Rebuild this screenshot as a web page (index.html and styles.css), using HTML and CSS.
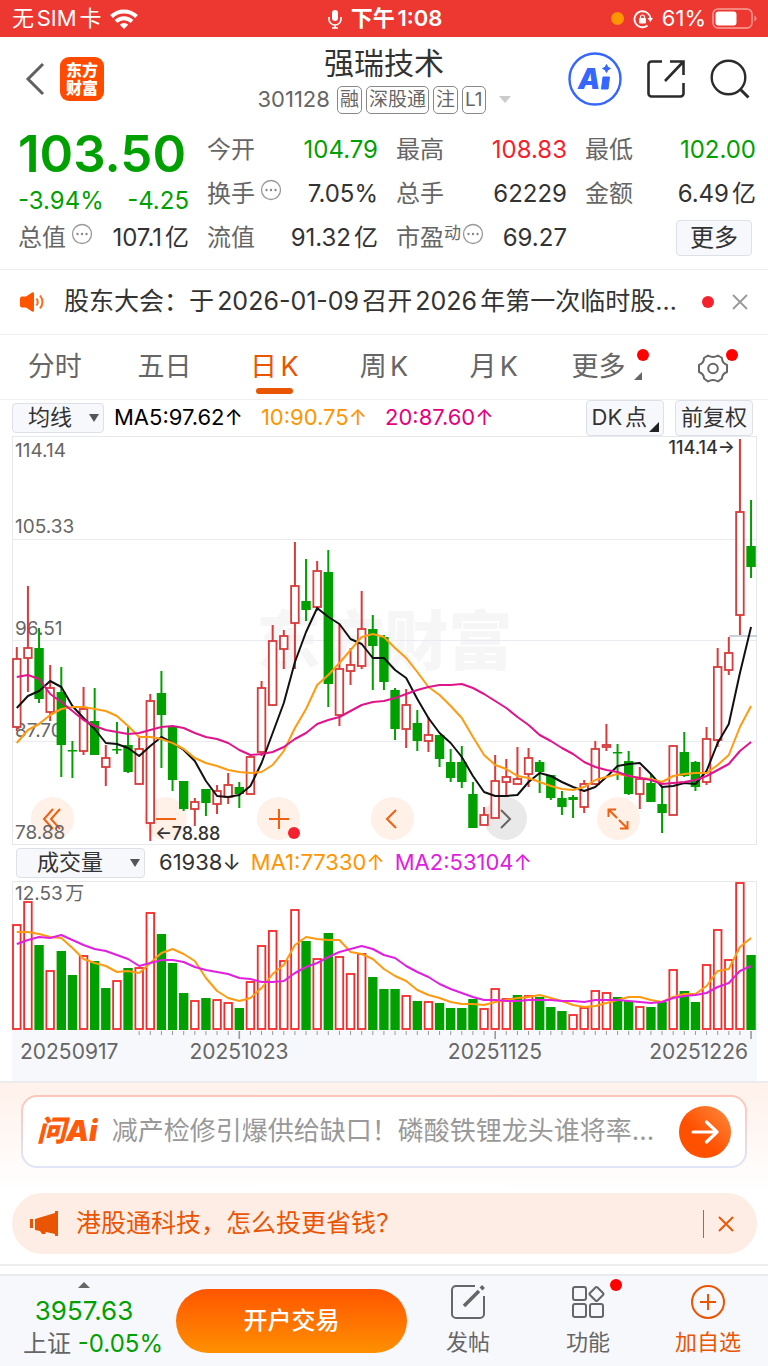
FILE: index.html
```html
<!DOCTYPE html>
<html lang="zh-CN">
<head>
  <meta charset="UTF-8">
  <meta name="viewport" content="width=device-width, initial-scale=1.0">
  <title>强瑞技术 301128</title>
  <link rel="stylesheet" href="styles.css">
</head>
<body>
  <div class="status-bar">
    <div class="status-left">
      <span>无SIM卡</span>
      <svg width="28" height="22" viewBox="0 0 28 22" fill="none" stroke="#fff" stroke-width="4">
        <path d="M1.5 8.5a18 18 0 0 1 25 0"/>
        <path d="M6 13.5a11.5 11.5 0 0 1 16 0"/>
        <path d="M14 21l-4.2-4.2a6 6 0 0 1 8.4 0z" fill="#fff" stroke="none"/>
      </svg>
    </div>
    <div class="status-time">
      <svg width="14" height="20" viewBox="0 0 14 20" fill="none" stroke="#fff" stroke-width="1.6">
        <rect x="4" y="1" width="6" height="11" rx="3" fill="#fff" stroke="none"/>
        <path d="M1 8v2a6 6 0 0 0 12 0V8M7 16v3M4 19h6"/>
      </svg>
      <span>下午1:08</span>
    </div>
    <div class="status-right">
      <span class="privacy-dot"></span>
      <svg width="20" height="20" viewBox="0 0 20 20" fill="none" stroke="#fff" stroke-width="1.8">
        <path d="M14.5 16.5a8 8 0 1 1 3-6.5"/>
        <path d="M14.5 9h5.500l-2.700 4z" fill="#fff" stroke="none"/>
        <rect x="6" y="9" width="7" height="5.500" rx="1" fill="#fff" stroke="none"/>
        <path d="M7.500 9.500V8a2 2 0 0 1 4 0v1.500" stroke-width="1.200"/>
      </svg>
      <span>61%</span>
      <svg width="46" height="22" viewBox="0 0 46 22">
        <rect x="1" y="1" width="39" height="19" rx="5" fill="none" stroke="#f8a09b" stroke-width="1.500"/>
        <rect x="3.500" y="3.500" width="21" height="14" rx="3" fill="#fff"/>
        <path d="M42.500 7.500q4 3 0 6z" fill="#f8a09b"/>
      </svg>
    </div>
  </div>

  <header class="header">
    <div class="header-left">
      <button class="icon-button" aria-label="返回">
        <svg width="22" height="34" viewBox="0 0 22 34" fill="none" stroke="#606060" stroke-width="3"><path d="M19 2L4 17l15 15"/></svg>
      </button>
      <div class="app-logo">东方<br>财富</div>
    </div>
    <div class="stock">
      <h1>强瑞技术</h1>
      <div class="stock-meta">
        <span class="stock-code">301128</span>
        <span class="tag">融</span>
        <span class="tag">深股通</span>
        <span class="tag">注</span>
        <span class="tag">L1</span>
        <span class="meta-caret"></span>
      </div>
    </div>
    <div class="header-right">
      <button class="icon-button" aria-label="智能助手">
        <svg width="54" height="54" viewBox="0 0 54 54">
          <circle cx="27" cy="27" r="25.500" fill="none" stroke="#3566ff" stroke-width="2.400"/>
          <text class="ai-letters" x="10" y="37">A</text>
          <path d="M35 25h6.500l-1.500 12h-6.500z" fill="#3566ff" stroke="#3566ff" stroke-linejoin="round"/>
          <path d="M38.500 12.500q1 3.500 4 4-3 .500-4 4-1-3.500-4-4 3-.500 4-4z" fill="#3566ff" stroke="#3566ff"/>
        </svg>
      </button>
      <button class="icon-button" aria-label="分享">
        <svg width="38" height="38" viewBox="0 0 38 38" fill="none" stroke="#2b2b2b" stroke-width="2.600">
          <path d="M15 1.500H4.500a3 3 0 0 0-3 3v29a3 3 0 0 0 3 3h29a3 3 0 0 0 3-3V23M23 1.500h13.500V15M36.500 1.500L18 21"/>
        </svg>
      </button>
      <button class="icon-button" aria-label="搜索">
        <svg width="40" height="40" viewBox="0 0 40 40" fill="none" stroke="#2b2b2b" stroke-width="2.400">
          <circle cx="18.500" cy="18.500" r="16.800"/><path d="M30 30l8.500 8.500" stroke-width="3"/>
        </svg>
      </button>
    </div>
  </header>

  <section class="quote">
    <div class="quote-price">
      <div class="price">103.50</div>
      <div class="change"><span>-3.94%</span><span>-4.25</span></div>
    </div>
    <div class="cell"><span class="label">今开</span><span class="down">104.79</span></div>
    <div class="cell"><span class="label">最高</span><span class="up">108.83</span></div>
    <div class="cell"><span class="label">最低</span><span class="down">102.00</span></div>
    <div class="cell"><span class="label">换手<svg class="more-dots" viewBox="0 0 22 22"><use href="#dots"/></svg></span><span>7.05%</span></div>
    <div class="cell"><span class="label">总手</span><span>62229</span></div>
    <div class="cell"><span class="label">金额</span><span>6.49亿</span></div>
    <div class="cell"><span class="label">总值<svg class="more-dots" viewBox="0 0 22 22"><use href="#dots"/></svg></span><span>107.1亿</span></div>
    <div class="cell"><span class="label">流值</span><span>91.32亿</span></div>
    <div class="cell"><span class="label">市盈<small>动</small><svg class="more-dots tight" viewBox="0 0 22 22"><use href="#dots"/></svg></span><span>69.27</span></div>
    <div class="cell cell-more"><button class="more-button">更多</button></div>
  </section>

  <svg class="defs" width="0" height="0">
    <symbol id="dots" viewBox="0 0 22 22">
      <circle cx="11" cy="11" r="9.500" fill="none" stroke="#999" stroke-width="1.300"/>
      <circle cx="6.500" cy="11" r="1.200" fill="#888"/><circle cx="11" cy="11" r="1.200" fill="#888"/><circle cx="15.500" cy="11" r="1.200" fill="#888"/>
    </symbol>
    <symbol id="cross" viewBox="0 0 16 16"><path d="M1 1l14 14M15 1L1 15" fill="none" stroke="currentColor" stroke-width="1.800"/></symbol>
  </svg>

  <section class="notice">
    <svg width="24" height="20" viewBox="0 0 24 20">
      <path d="M0 6.500a2 2 0 0 1 2-2h4L12 .500q2-1 2 1v17q0 2-2 1L6 15.500H2a2 2 0 0 1-2-2z" fill="#ff5500"/>
      <path d="M16.500 6.500q2.500 3.500 0 7M20 3.500q5 6.500 0 13" fill="none" stroke="#ff6a20" stroke-width="2"/>
    </svg>
    <p>股东大会：于2026-01-09召开2026年第一次临时股…</p>
    <span class="dot"></span>
    <button class="icon-button notice-close" aria-label="关闭公告"><svg width="16" height="16"><use href="#cross"/></svg></button>
  </section>

  <nav class="tabs">
    <button>分时</button>
    <button>五日</button>
    <button class="active">日K</button>
    <button>周K</button>
    <button>月K</button>
    <button class="tab-more">更多<span class="corner"></span><span class="badge"></span></button>
    <button class="tab-settings" aria-label="设置">
      <svg width="30" height="30" viewBox="0 0 30 30" fill="none" stroke="#666" stroke-width="2">
        <path d="M10 1.500q5 3 10 0l4 2.500q0 5 5 7v7q-5 2-5 6.500l-4 3q-5-3-10 0l-4-3q0-4.500-5-6.500v-7q5-2 5-7z" stroke-linejoin="round"/>
        <circle cx="15" cy="14.500" r="4.800"/>
      </svg>
      <span class="badge"></span>
    </button>
  </nav>

  <main class="charts">
    <div class="indicator-bar">
      <span class="select-wrap">
        <select aria-label="主图指标"><option>均线</option></select>
      </span>
      <span class="ma-black">MA5:97.62↑</span>
      <span class="ma-orange">10:90.75↑</span>
      <span class="ma-pink">20:87.60↑</span>
      <div class="chart-buttons">
        <button class="dk">DK点<span class="corner"></span></button>
        <button>前复权</button>
      </div>
    </div>

    <div class="k-chart">
      <div class="watermark">东方财富</div>
      <div class="chart-controls">
        <button aria-label="最早"><svg viewBox="0 0 24 24"><path d="M12 2L3 12l9 10M19 2l-9 10 9 10"/></svg></button>
        <button aria-label="缩小"><svg viewBox="0 0 24 24"><path d="M2 12h20"/></svg></button>
        <button aria-label="放大"><svg viewBox="0 0 24 24"><path d="M2 12h20M12 2v20"/></svg><span class="badge"></span></button>
        <button aria-label="左移"><svg viewBox="0 0 24 24"><path d="M16 3l-9 9 9 9"/></svg></button>
        <button class="grey" aria-label="右移"><svg viewBox="0 0 24 24"><path d="M8 3l9 9-9 9"/></svg></button>
        <button aria-label="全屏"><svg viewBox="0 0 24 24"><path d="M2.500 10V2.500H10M3 3l8 8M21.500 14v7.500H14M21 21l-8-8"/></svg></button>
      </div>
      <svg id="kline" class="plot" viewBox="12 436 745 409"></svg>
    </div>

    <div class="indicator-bar volume-bar">
      <span class="select-wrap wide">
        <select aria-label="副图指标"><option>成交量</option></select>
      </span>
      <span>61938↓</span>
      <span class="ma-orange">MA1:77330↑</span>
      <span class="ma-purple">MA2:53104↑</span>
    </div>
    <svg id="volume" class="plot" viewBox="12 881 745 200"></svg>
  </main>

  <section class="ask">
    <form class="ask-box" onsubmit="return false">
      <span class="ask-logo">问Ai</span>
      <input type="text" aria-label="问Ai" placeholder="减产检修引爆供给缺口！磷酸铁锂龙头谁将率…">
      <button aria-label="发送">
        <svg width="28" height="24" viewBox="0 0 28 24" fill="none" stroke="#fff" stroke-width="3.200" stroke-linecap="round" stroke-linejoin="round"><path d="M2 12h24M15.500 2L26 12 15.500 22"/></svg>
      </button>
    </form>
  </section>

  <aside class="promo">
    <svg width="28" height="26" viewBox="0 0 28 26" fill="#ea5504">
      <path d="M0 8h3v9H0zM5 8l20-6V0h3v25h-3v-2l-9-2-1 2h-3l-2-3-5-1z"/>
    </svg>
    <a href="#">港股通科技，怎么投更省钱？</a>
    <button class="icon-button" aria-label="关闭广告"><svg width="16" height="16"><use href="#cross"/></svg></button>
  </aside>

  <footer class="bottom-bar">
    <div class="index">
      <span class="index-caret"></span>
      <span class="index-value">3957.63</span>
      <span class="index-name">上证 <b>-0.05%</b></span>
    </div>
    <button class="trade">开户交易</button>
    <button class="action">
      <svg width="34" height="34" viewBox="0 0 34 34" fill="none" stroke="#666" stroke-width="2">
        <path d="M24 1H5a4 4 0 0 0-4 4v24a4 4 0 0 0 4 4h24a4 4 0 0 0 4-4V11"/>
        <path d="M13 21L28 6" stroke-width="3.500"/><path d="M30 4l2.500-2.500" stroke-width="4"/>
      </svg>
      发帖
    </button>
    <button class="action">
      <svg width="34" height="34" viewBox="0 0 34 34" fill="none" stroke="#666" stroke-width="2">
        <rect x="2" y="2" width="13" height="13" rx="2"/><rect x="2" y="19" width="13" height="13" rx="2"/><rect x="19" y="19" width="13" height="13" rx="2"/>
        <path d="M24.500 2.500q1-1 2 0l5.500 5.500q1 1 0 2L26.500 15.500q-1 1-2 0L19 10q-1-1 0-2z"/>
      </svg>
      功能
      <span class="badge"></span>
    </button>
    <button class="action add">
      <svg width="34" height="34" viewBox="0 0 34 34" fill="none" stroke="#ea5504" stroke-width="2"><circle cx="17" cy="17" r="16"/><path d="M9 17h16M17 9v16"/></svg>
      加自选
    </button>
  </footer>

  <script src="chart.js"></script>
</body>
</html>
```

FILE: styles.css
```css
* {
  margin: 0;
  padding: 0;
  box-sizing: border-box;
}

body {
  font-family: Inter, "Noto Sans CJK SC", sans-serif;
  font-size: 24px;
  line-height: 1.25;
  color: #333;
  background: #fff;
  text-autospace: normal;
}

button,
input,
select {
  font: inherit;
  color: inherit;
  border: none;
  background: none;
  text-autospace: inherit;
}

button {
  cursor: pointer;
}

svg {
  flex: none;
}

.defs {
  position: absolute;
}

.icon-button {
  display: flex;
  align-items: center;
}

.badge {
  position: absolute;
  width: 12px;
  height: 12px;
  border-radius: 50%;
  background: #ff0000;
}

/* Status bar */
.status-bar {
  display: grid;
  grid-template-columns: 1fr auto 1fr;
  align-items: center;
  height: 37px;
  padding: 0 10px 0 12px;
  font-size: 22px;
  color: #fff;
  background: #ed3831;
}

.status-left,
.status-time,
.status-right {
  display: flex;
  align-items: center;
  gap: 9px;
}

.status-time {
  font-weight: 600;
}

.status-right {
  justify-content: flex-end;
}

.status-right svg:last-child {
  margin-left: -3px;
}

.privacy-dot {
  width: 13px;
  height: 13px;
  border-radius: 50%;
  background: #ff9500;
}

/* Header */
.header {
  display: grid;
  grid-template-columns: 1fr auto 1fr;
  align-items: center;
  padding: 5px 18px 10px;
}

.header-left,
.header-right {
  display: flex;
  align-items: center;
}

.header-left {
  gap: 14px;
  padding-left: 6px;
}

.header-right {
  justify-content: flex-end;
  gap: 25px;
}

.app-logo {
  width: 44px;
  height: 44px;
  padding-top: 4px;
  border-radius: 9px;
  font-size: 16px;
  font-weight: 900;
  line-height: 18px;
  text-align: center;
  color: #fff;
  background: #ff4a00;
}

.ai-letters {
  font-size: 28px;
  font-weight: 900;
  font-style: italic;
  fill: #3566ff;
}

.stock {
  text-align: center;
}

.stock h1 {
  font-size: 30px;
  font-weight: 400;
  line-height: 42px;
}

.stock-meta {
  display: flex;
  align-items: center;
  justify-content: center;
  gap: 4px;
  height: 31px;
  color: #666;
}

.stock-code {
  margin-right: 3px;
  font-size: 22px;
}

.tag {
  padding: 0 2px;
  border: 1px solid #888;
  border-radius: 5px;
  font-size: 19px;
  line-height: 26px;
}

.meta-caret {
  margin-left: 9px;
  border: 6px solid transparent;
  border-top: 7px solid #ccc;
  border-bottom: none;
}

/* Quote */
.quote {
  display: grid;
  grid-template-columns: repeat(4, 1fr);
  grid-auto-rows: 44px;
  column-gap: 18px;
  padding: 3px 12px 9px 18px;
  border-bottom: 1px solid #eee;
}

.quote-price {
  grid-row: span 2;
  display: flex;
  flex-direction: column;
  justify-content: space-between;
  color: #00a000;
}

.price {
  font-size: 51px;
  font-weight: 600;
  line-height: 52px;
}

.change {
  display: flex;
  justify-content: space-between;
  line-height: 30px;
}

.cell {
  display: flex;
  align-items: center;
  justify-content: space-between;
  white-space: nowrap;
}

.label {
  display: flex;
  align-items: center;
  color: #666;
}

.label small {
  align-self: flex-start;
  font-size: 17px;
  line-height: 20px;
}

.more-dots {
  align-self: flex-start;
  width: 22px;
  height: 22px;
  margin-left: 5px;
}

.more-dots.tight {
  margin-left: 1px;
}

.down {
  color: #00a000;
}

.up {
  color: #f5222d;
}

.cell-more {
  justify-content: flex-end;
  padding-right: 4px;
}

.more-button {
  padding: 0 13px;
  border: 1px solid #dde0e6;
  border-radius: 4px;
  line-height: 34px;
  background: #f7f8fb;
}

/* Notice */
.notice {
  display: flex;
  align-items: center;
  justify-content: space-between;
  height: 65px;
  padding: 0 20px;
  border-bottom: 1px solid #f0f0f0;
  font-size: 25px;
}

.notice p {
  flex: 1;
  margin-left: 20px;
  white-space: nowrap;
}

.dot {
  width: 12px;
  height: 12px;
  border-radius: 50%;
  background: #f5222d;
}

.notice-close {
  margin-left: 18px;
  color: #999;
}

/* Tabs */
.tabs {
  display: grid;
  grid-template-columns: repeat(7, 1fr);
  height: 65px;
  border-bottom: 1px solid #f0f0f0;
  font-size: 27px;
  color: #666;
}

.tabs button {
  position: relative;
}

.tabs .active {
  color: #ea5504;
}

.active::after {
  content: "";
  position: absolute;
  left: calc(50% - 18px);
  bottom: 5px;
  width: 37px;
  height: 6px;
  border-radius: 3px;
  background: #ea5504;
}

.tabs .tab-more {
  padding-right: 10px;
}

.corner {
  position: absolute;
  right: 4px;
  bottom: 3px;
  border-left: 10px solid transparent;
  border-bottom: 10px solid #222;
}

.tab-more .corner {
  right: 16px;
  bottom: 19px;
  border-left-width: 8px;
  border-bottom: 8px solid #666;
}

.tabs .badge {
  top: 14px;
  right: 9px;
}

.tabs .tab-settings .badge {
  right: 30px;
}

.tab-settings svg {
  vertical-align: middle;
}

/* Charts */
.charts {
  padding: 0 11px 0 12px;
}

.indicator-bar {
  display: flex;
  align-items: center;
  gap: 18px;
  height: 36px;
  font-size: 22px;
  white-space: nowrap;
}

.indicator-bar > span:nth-child(2) {
  margin-left: -8px;
}

.select-wrap {
  position: relative;
  width: 92px;
}

.select-wrap.wide {
  width: 129px;
}

.select-wrap::after {
  content: "";
  position: absolute;
  right: 5px;
  top: 11px;
  border: 5px solid transparent;
  border-top: 8px solid #555;
  border-bottom: none;
}

.select-wrap select {
  display: block;
  width: 100%;
  height: 30px;
  padding-left: 15px;
  appearance: none;
  border: 1px solid #dde0e6;
  border-radius: 4px;
  background: #f7f8fb;
}

.select-wrap.wide select {
  padding-left: 20px;
}

.ma-black {
  color: #000;
}

.ma-orange {
  color: #ff9500;
}

.ma-pink {
  color: #e6007e;
}

.ma-purple {
  color: #e020e0;
}

.chart-buttons {
  display: flex;
  gap: 11px;
  margin-left: auto;
  padding-right: 4px;
}

.chart-buttons button {
  position: relative;
  height: 36px;
  padding: 0 5px;
  border: 1px solid #dde0e6;
  border-radius: 4px;
  background: #f7f8fb;
}

.chart-buttons .dk {
  padding-right: 16px;
}

.volume-bar {
  gap: 10px;
  padding-left: 4px;
}

.volume-bar > span:nth-child(2) {
  margin-left: 4px;
}

.k-chart {
  position: relative;
}

.plot {
  display: block;
  position: relative;
  width: 100%;
  height: auto;
  pointer-events: none;
}

.plot text {
  font-size: 19px;
  fill: #666;
}

.plot .mark {
  font-size: 18px;
  font-weight: 500;
  fill: #333;
}

.plot .date {
  font-size: 21px;
}

.plot polyline {
  fill: none;
  stroke-width: 2;
  stroke-linejoin: round;
}

.watermark {
  position: absolute;
  top: 40%;
  width: 100%;
  font-size: 64px;
  font-weight: 900;
  line-height: 82px;
  text-align: center;
  color: #f6f6f6;
}

.chart-controls {
  position: absolute;
  left: 19px;
  right: 117px;
  bottom: 5px;
  display: flex;
  justify-content: space-between;
}

.chart-controls button {
  position: relative;
  display: flex;
  align-items: center;
  justify-content: center;
  width: 43px;
  height: 43px;
  border-radius: 50%;
  background: #fff0e8;
}

.chart-controls .grey {
  background: #e9e9e9;
}

.chart-controls svg {
  width: 24px;
  height: 24px;
  fill: none;
  stroke: #f06010;
  stroke-width: 2;
}

.chart-controls .grey svg {
  stroke: #666;
}

.chart-controls .badge {
  right: 0;
  bottom: 1px;
  background: #f5222d;
}

/* Ask */
.ask {
  padding: 12px 21px 25px;
  border-top: 2px solid #ececef;
  background: linear-gradient(#fff1eb, #fff);
}

.ask-box {
  display: flex;
  align-items: center;
  height: 73px;
  padding: 0 14px;
  border: 2px solid transparent;
  border-radius: 16px;
  background: linear-gradient(#fff, #fff) padding-box, linear-gradient(#ffc4b8, #dfe6f8) border-box;
}

.ask-logo {
  font-size: 29px;
  font-weight: 900;
  font-style: italic;
  color: #ff5a0a;
  text-autospace: no-autospace;
}

.ask-box input {
  flex: 1;
  min-width: 0;
  margin: 0 20px 0 14px;
  font-size: 26px;
  text-overflow: ellipsis;
}

.ask-box input::placeholder {
  color: #999;
}

.ask-box button {
  display: flex;
  align-items: center;
  justify-content: center;
  width: 52px;
  height: 52px;
  border-radius: 50%;
  background: linear-gradient(45deg, #ff5000 40%, #ff8c40);
}

/* Promo */
.promo {
  display: flex;
  align-items: center;
  height: 61px;
  margin: 0 11px 20px 12px;
  padding: 0 23px 0 18px;
  border-radius: 31px;
  font-size: 25px;
  color: #ea5504;
  background: #feede5;
}

.promo a {
  flex: 1;
  margin-left: 18px;
  color: inherit;
  text-decoration: none;
}

.promo button {
  height: 28px;
  padding-left: 14px;
  border-left: 1px solid #ea5504;
}

/* Bottom bar */
.bottom-bar {
  display: grid;
  grid-template-columns: 168px 1fr repeat(3, 120px);
  align-items: center;
  height: 92px;
  border-top: 2px solid #e8eaee;
  background: #f7f8fb;
  box-shadow: 0 -8px 0 #fff, 0 -10px 0 #eee;
}

.index {
  display: flex;
  flex-direction: column;
  align-items: center;
  padding-left: 18px;
  line-height: 33px;
  white-space: nowrap;
}

.index-caret {
  margin: 0 18px 6px 0;
  border: 6px solid transparent;
  border-top: none;
  border-bottom: 6px solid #666;
}

.index-value,
.index-name b {
  font-weight: 400;
  color: #00a000;
}

.index-value {
  margin-right: 18px;
  font-size: 26px;
}

.index-name {
  color: #666;
}

.trade {
  height: 64px;
  margin: 0 1px 0 8px;
  border-radius: 32px;
  font-weight: 500;
  color: #fff;
  background: linear-gradient(#ff5500, #ff9000);
}

.action {
  position: relative;
  display: flex;
  flex-direction: column;
  align-items: center;
  gap: 8px;
  font-size: 22px;
  line-height: 30px;
  color: #666;
}

.action .badge {
  top: -6px;
  right: 26px;
}

.action.add {
  color: #ea5504;
}
```

FILE: chart.js
```js
// [colour, high, body top, body bottom, low, volume colour, volume top]
const days = [
  ['r', 647, 659, 727, 731, 'r', 924], ['r', 586, 648, 658, 692, 'r', 901], ['g', 628, 648, 699, 703, 'g', 945],
  ['r', 665, 688, 712, 721, 'r', 970], ['g', 667, 692, 745, 777, 'g', 951], ['g', 741, 750, 751, 778, 'g', 975],
  ['r', 687, 709, 751, 755, 'r', 955], ['g', 688, 721, 755, 755, 'g', 961], ['r', 745, 758, 767, 786, 'g', 988],
  ['g', 722, 749, 750, 754, 'r', 980], ['g', 727, 745, 772, 773, 'g', 968], ['r', 738, 749, 784, 784, 'r', 967],
  ['r', 694, 701, 823, 841, 'r', 912], ['g', 671, 693, 715, 768, 'g', 934], ['g', 727, 727, 780, 791, 'g', 963],
  ['g', 781, 781, 809, 811, 'g', 993], ['r', 798, 802, 809, 826, 'r', 1000], ['g', 789, 789, 803, 816, 'g', 998],
  ['r', 785, 791, 804, 814, 'r', 999], ['r', 773, 785, 797, 804, 'r', 1002], ['g', 782, 787, 794, 808, 'g', 1008],
  ['r', 755, 757, 794, 794, 'r', 981], ['r', 681, 688, 752, 756, 'r', 945], ['r', 625, 641, 705, 706, 'r', 930],
  ['r', 630, 636, 649, 669, 'r', 960], ['r', 542, 586, 623, 669, 'r', 909], ['g', 559, 601, 610, 621, 'g', 941],
  ['r', 561, 571, 607, 611, 'r', 958], ['g', 550, 572, 684, 707, 'g', 933], ['r', 624, 669, 715, 726, 'r', 956],
  ['r', 648, 665, 671, 685, 'r', 973], ['r', 591, 629, 666, 669, 'r', 953], ['g', 615, 629, 646, 690, 'g', 977],
  ['g', 635, 637, 682, 690, 'g', 989], ['g', 688, 690, 729, 740, 'g', 989], ['r', 689, 705, 729, 748, 'r', 995],
  ['g', 710, 723, 741, 751, 'g', 1001], ['r', 717, 735, 741, 752, 'r', 1001], ['g', 735, 735, 759, 767, 'g', 1003],
  ['g', 749, 762, 778, 782, 'g', 1008], ['g', 746, 762, 782, 788, 'g', 1008], ['g', 782, 794, 828, 828, 'g', 999],
  ['r', 807, 815, 825, 825, 'r', 1008], ['r', 755, 781, 818, 818, 'r', 988], ['r', 759, 777, 782, 795, 'r', 998],
  ['r', 747, 779, 784, 784, 'g', 995], ['r', 748, 758, 774, 787, 'r', 995], ['g', 760, 762, 772, 793, 'g', 997],
  ['g', 775, 775, 798, 800, 'g', 1007], ['g', 791, 798, 807, 815, 'g', 1011], ['g', 795, 797, 800, 818, 'r', 1014],
  ['r', 780, 784, 807, 813, 'r', 1007], ['r', 741, 749, 784, 785, 'r', 990], ['r', 724, 745, 747, 751, 'r', 992],
  ['g', 744, 752, 753, 780, 'g', 997], ['g', 751, 761, 794, 795, 'g', 1001], ['r', 767, 779, 794, 809, 'r', 1006],
  ['g', 774, 783, 802, 802, 'g', 1007], ['g', 787, 804, 813, 833, 'g', 1002], ['r', 745, 746, 815, 815, 'r', 969],
  ['g', 732, 752, 776, 777, 'g', 991], ['g', 761, 762, 787, 791, 'g', 1002], ['r', 727, 739, 782, 785, 'r', 964],
  ['r', 648, 667, 740, 747, 'r', 929], ['r', 637, 653, 670, 675, 'r', 959], ['r', 439, 512, 615, 635, 'r', 882],
  ['g', 500, 546, 567, 578, 'g', 955]
];

const ma5 = [708, 696, 691, 681, 687, 706, 718, 729, 743, 744, 748, 756, 746, 737, 743, 750, 761, 781, 796, 797, 795, 786, 763, 733, 703, 662, 632, 608, 617, 624, 639, 644, 658, 658, 670, 678, 699, 718, 733, 743, 757, 776, 792, 796, 796, 795, 782, 773, 776, 782, 787, 791, 787, 777, 766, 764, 763, 774, 787, 786, 783, 784, 771, 743, 724, 673, 627];
const ma10 = [743, 730, 724, 715, 709, 707, 707, 709, 711, 716, 726, 737, 737, 739, 743, 749, 758, 763, 766, 770, 772, 773, 772, 765, 751, 728, 709, 685, 675, 663, 650, 637, 634, 637, 648, 658, 672, 687, 695, 706, 718, 737, 755, 765, 769, 776, 778, 782, 786, 789, 790, 787, 780, 777, 774, 776, 778, 779, 782, 776, 774, 773, 773, 765, 755, 727, 706];
const ma20 = [677, 675, 679, 694, 702, 711, 720, 726, 730, 732, 734, 733, 730, 727, 726, 728, 733, 737, 739, 743, 750, 755, 754, 752, 747, 739, 733, 724, 720, 717, 711, 705, 702, 701, 698, 694, 690, 687, 685, 685, 684, 688, 694, 701, 708, 717, 725, 735, 741, 748, 754, 762, 767, 770, 772, 776, 778, 780, 784, 783, 782, 780, 776, 770, 764, 751, 742];
const vol1 = [932, 932, 934, 937, 938, 948, 959, 963, 966, 972, 971, 973, 963, 953, 949, 954, 961, 978, 991, 998, 1001, 998, 988, 974, 965, 945, 937, 939, 940, 940, 952, 954, 959, 969, 976, 981, 990, 995, 998, 1002, 1004, 1004, 1005, 1002, 1000, 998, 997, 995, 998, 1001, 1005, 1007, 1006, 1003, 1000, 997, 997, 1000, 1002, 997, 994, 994, 986, 971, 969, 947, 938];
const vol2 = [944, 940, 937, 938, 935, 940, 945, 949, 951, 955, 959, 966, 963, 960, 960, 962, 967, 970, 972, 974, 978, 979, 982, 982, 981, 973, 967, 963, 957, 952, 949, 946, 949, 955, 958, 966, 972, 977, 984, 989, 993, 997, 1000, 1000, 1001, 1001, 1000, 1000, 1000, 1001, 1001, 1002, 1000, 1000, 1000, 1001, 1002, 1003, 1002, 998, 996, 995, 993, 987, 983, 971, 966];

const step = 11.125;
const x = i => 16.8 + i * step;

function hline(y, from, to, color) {
  return `<path d="M${from} ${y}H${to}" stroke="${color}"/>`;
}

function average(values, color) {
  const points = values.map((y, i) => `${x(i)},${y}`).join(' ');
  return `<polyline points="${points}" stroke="${color}"/>`;
}

// rising days are hollow, falling days are solid
function bar(i, top, bottom, color, up) {
  if (up) {
    return `<rect x="${x(i) - 3.8}" y="${top}" width="7.6" height="${Math.max(bottom - top, 1)}" fill="#fff" stroke="${color}" stroke-width="1.8"/>`;
  }
  return `<rect x="${x(i) - 4.7}" y="${top}" width="9.4" height="${Math.max(bottom - top, 1.5)}" fill="${color}"/>`;
}

function drawKline() {
  let out = '<rect x="12.500" y="436.500" width="744" height="408" fill="none" stroke="#e6e8ec"/>';
  [539.5, 640.5, 741.5].forEach(y => { out += hline(y, 12, 757, '#e9ebf0'); });
  out += '<path d="M729 636H757" stroke="#ccd0d8" stroke-width="2"/>';
  [['114.14', 457], ['105.33', 533], ['96.51', 635], ['87.70', 737], ['78.88', 839]].forEach(([t, y]) => {
    out += `<text x="15" y="${y}">${t}</text>`;
  });
  days.forEach(([c, high, top, bottom, low], i) => {
    const color = c === 'r' ? '#d93a3a' : '#00a000';
    out += `<path d="M${x(i)} ${high}V${low}" stroke="${color}" stroke-width="2"/>`;
    out += bar(i, top, bottom, color, c === 'r');
  });
  out += average(ma5, '#111') + average(ma10, '#ff9b10') + average(ma20, '#e0148c');
  out += '<text class="mark" x="735" y="454" text-anchor="end">114.14→</text>';
  out += '<text class="mark" x="155" y="840">←78.88</text>';
  document.getElementById('kline').innerHTML = out;
}

function drawVolume() {
  let out = '<rect x="12" y="1030" width="745" height="51" fill="#f7f8fb"/>';
  out += '<path d="M12.500 1030V881.500H756.500V1030" fill="none" stroke="#e6e8ec"/>';
  out += '<text x="15" y="900">12.53万</text>';
  days.forEach((day, i) => {
    const up = day[5] === 'r';
    out += bar(i, up ? day[6] + 1 : day[6], up ? 1029 : 1030, up ? '#f52a2a' : '#00a000', up);
    if (i > 10) {
      const long = i === 20 || i === 43 || i === 66;
      out += `<path d="M${x(i)} 1031V${long ? 1039 : 1035}" stroke="#999" stroke-width="${long ? 1.6 : 1}"/>`;
    }
  });
  out += average(vol1, '#ff9b10') + average(vol2, '#e020e0');
  [['20250917', 20, 'start'], ['20251023', 239, 'middle'], ['20251125', 495, 'middle'], ['20251226', 748, 'end']].forEach(([t, px, anchor]) => {
    out += `<text class="date" x="${px}" y="1059" text-anchor="${anchor}">${t}</text>`;
  });
  document.getElementById('volume').innerHTML = out;
}

drawKline();
drawVolume();
```
